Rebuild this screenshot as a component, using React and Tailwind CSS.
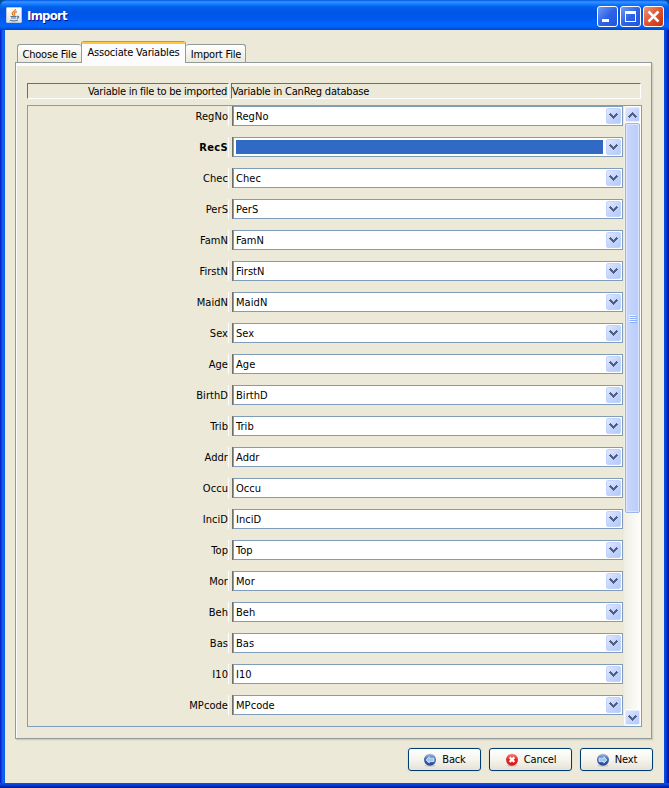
import React from "react";

const FIELDS = [
  "RegNo", "RecS", "Chec", "PerS", "FamN", "FirstN", "MaidN", "Sex", "Age", "BirthD",
  "Trib", "Addr", "Occu", "InciD", "Top", "Mor", "Beh", "Bas", "I10", "MPcode",
];

function Chevron({ up = false }) {
  return (
    <svg width="9" height="6" viewBox="0 0 9 6" className={up ? "rotate-180" : ""} shapeRendering="crispEdges">
      <path
        d="M1 0h1v1h1v1h1v1h1v-1h1v-1h1v-1h1v1h1v1h-1v1h-1v1h-1v1h-1v1h-1v-1h-1v-1h-1v-1h-1v-1h-1v-1h1z"
        fill="#4d6185"
      />
    </svg>
  );
}

function ArrowButton({ up = false, scroll = false }) {
  return (
    <div className={`flex shrink-0 items-center justify-center rounded-[2px] border bg-linear-to-br from-[#dfe8fe] via-[#c6d5fd] to-[#b5c9f8] ${scroll ? "h-[15px] w-[15px] border-[#e4ecff] shadow-[0_0_0_1px_#ffffff]" : "h-4 w-[15px] border-[#c3d3fd]"}`}>
      <Chevron up={up} />
    </div>
  );
}

function TitleButton({ kind }) {
  const tone =
    kind === "close"
      ? "from-[#ee9478] via-[#e2522b] to-[#c4300b]"
      : "from-[#7198f4] via-[#2f63e6] to-[#1f55e0]";
  return (
    <div className={`flex h-[21px] w-[21px] items-center justify-center rounded-[3px] border border-white bg-linear-to-br ${tone}`}>
      <svg width="19" height="19" viewBox="0 0 19 19">
        {kind === "min" && <path d="M4 12h7v3H4z" fill="white" />}
        {kind === "max" && <path d="M4 4h11v11H4z M5 7v7h9V7z" fill="white" fillRule="evenodd" />}
        {kind === "close" && <path d="M4.500 4.500l10 10M14.500 4.500l-10 10" stroke="white" strokeWidth="2.500" />}
      </svg>
    </div>
  );
}

function JavaLogo() {
  return (
    <div className="h-4 w-4 rounded-[1px] border border-[#b8c6d8] bg-linear-to-b from-white to-[#dfe3e8]">
      <svg width="14" height="14" viewBox="0 0 14 14" fill="none">
        <path d="M8.500 1C9 3 5 3.500 5.200 5.500c0 1 1 1.300 1 2.200M10 3.500C7.500 4.200 6.700 5 7.500 6.200c.4.600.1 1.100-.4 1.500" stroke="#e58427" strokeWidth="1.400" />
        <path d="M3.500 8.500h6M4 10h5M3 12.200c2 .8 6 .7 8-.2M10 8.400c2.300-.5 2.100 1.600-.2 2" stroke="#547795" strokeWidth="1.200" />
      </svg>
    </div>
  );
}

function ActionIcon({ kind }) {
  return (
    <svg width="14" height="14" viewBox="0 0 14 14">
      <defs>
        <linearGradient id={`orb-${kind}`} x1="0" y1="0" x2="0" y2="1">
          <stop offset="0" stopColor={kind === "cancel" ? "#f58a83" : "#b4c0d8"} />
          <stop offset="0.45" stopColor={kind === "cancel" ? "#e52a26" : "#4068b0"} />
          <stop offset="1" stopColor={kind === "cancel" ? "#d81515" : "#234798"} />
        </linearGradient>
      </defs>
      <ellipse cx="7" cy="12.500" rx="5.500" ry="1.200" fill="#000" opacity="0.12" />
      <circle cx="7" cy="6.700" r="6" fill={`url(#orb-${kind})`} />
      {kind === "cancel" ? (
        <path d="M4.700 4.400l4.600 4.600M9.300 4.400L4.700 9" stroke="white" strokeWidth="2.300" />
      ) : (
        <path
          d="M3 5.200h4.800V3.800L11 6.900 7.800 10V8.600H3z"
          fill="#9cc6f0"
          stroke="#d6e9fb"
          strokeWidth="0.900"
          transform={kind === "back" ? "matrix(-1 0 0 1 14 0)" : undefined}
        />
      )}
    </svg>
  );
}

function ActionButton({ kind, width, children }) {
  return (
    <button className={`flex h-[23px] items-center justify-center gap-[5px] rounded-[3px] border border-[#003c74] bg-linear-to-b from-white via-[#f5f4ee] to-[#e6e2d6] shadow-[0_0_0_1px_#e4e1d1] ${width}`}>
      <ActionIcon kind={kind} />
      <span>{children}</span>
    </button>
  );
}

function FieldRow({ name }) {
  const missing = name === "RecS";
  return (
    <div className="flex h-5 shrink-0 tracking-[0.060px]">
      <div className={`flex w-[201px] items-center justify-end border-r border-white pt-px ${missing ? "font-bold tracking-[0.350px]" : ""}`}>
        {name}
      </div>
      <div className="ml-[3px] flex w-[391px] border-l border-[#716f64]">
        <div className="flex w-full items-center border border-[#7f9db9] bg-white pr-px pl-[2px]">
          <div className={`flex h-[14px] flex-1 items-center ${missing ? "bg-[#316ac5]" : "pt-px"}`}>{missing ? "" : name}</div>
          <div className="ml-[3px] flex">
            <ArrowButton />
          </div>
        </div>
      </div>
    </div>
  );
}

export default function App() {
  return (
    <div className="flex h-[788px] w-[669px] cursor-default flex-col overflow-hidden bg-[#004e98] font-['DejaVu_Sans_Condensed','DejaVu_Sans',sans-serif] text-[11px] leading-[14px] tracking-[-0.190px] text-black">
      <header className="flex h-[30px] shrink-0 items-center rounded-t-[7px] bg-[linear-gradient(to_bottom,#0058e6_0px,#3a93ff_2px,#127dff_4px,#0260ed_7px,#0055e5_12px,#0059ee_19px,#0066ff_25px,#0060f5_27px,#0144d0_30px)] pr-[5px] pl-[6px]">
        <JavaLogo />
        <h1 className="ml-[5px] pt-px text-[13px] font-bold tracking-[-0.720px] text-white [text-shadow:1px_1px_0_#0f1089]">Import</h1>
        <div className="ml-auto flex gap-[2px] pt-[3px]">
          <TitleButton kind="min" />
          <TitleButton kind="max" />
          <TitleButton kind="close" />
        </div>
      </header>

      <div className="flex min-h-0 flex-1">
        <div className="w-[5px] shrink-0 bg-[linear-gradient(to_right,#0019cf_0px,#0831d9_1px,#166aee_3px,#0855dd_5px)]" />
        <main className="flex w-[659px] flex-col bg-[#ece9d8]">
          <nav className="ml-3 flex h-8 items-end">
            <div className="flex h-[18px] w-[64px] items-center justify-center rounded-t-[3px] border border-r-0 border-b-0 border-[#919b9c] bg-linear-to-b from-white to-[#ece9d8] pt-[2px] whitespace-nowrap">Choose File</div>
            <div className="z-10 -mb-px flex h-[22px] w-[105px] flex-col overflow-hidden rounded-t-[3px] border-x border-[#919b9c] bg-[#fcfcfe]">
              <div className="h-[3px] shrink-0 border-t border-[#e68b2c] bg-[#ffc73c]" />
              <span className="pt-[2px] text-center whitespace-nowrap">Associate Variables</span>
            </div>
            <div className="flex h-[18px] w-[60px] items-center justify-center rounded-t-[3px] border border-b-0 border-l-0 border-[#919b9c] bg-linear-to-b from-white to-[#ece9d8] pt-[2px] pl-px whitespace-nowrap">Import File</div>
          </nav>

          <section className="ml-[10px] flex h-[677px] w-[637px] shrink-0 flex-col border border-[#919b9c] pl-[11px] shadow-[inset_1px_3px_0_#fcfcfe,1px_1px_0_#d0cebf,2px_2px_0_#e3e0d0]">
            <div className="mt-5 flex h-4">
              <div className="flex w-[202px] items-center justify-end border border-t-[#716f64] border-r-white border-b-white border-l-[#716f64] pt-px pr-px tracking-[-0.260px]">Variable in file to be imported</div>
              <div className="ml-[2px] flex w-[410px] items-center border border-t-[#716f64] border-r-white border-b-white border-l-[#716f64] pt-px tracking-[-0.190px]">Variable in CanReg database</div>
            </div>

            <div className="mt-[6px] flex h-[622px] w-[615px] border border-[#7f9db9]">
              <div className="flex w-[596px] flex-col gap-[11px]">
                {FIELDS.map((name) => (
                  <FieldRow key={name} name={name} />
                ))}
              </div>
              <div className="flex w-[17px] flex-col items-center bg-linear-to-r from-[#f0eee5] to-[#fefefb] pt-px">
                <ArrowButton up scroll />
                <div className="mt-px flex h-[390px] w-[15px] shrink-0 flex-col items-center justify-center gap-px rounded-[2px] border border-[#9db5e6] bg-linear-to-r from-[#cad8fe] to-[#b9cbfa] shadow-[inset_0_0_0_1px_#dce6ff]">
                  {[0, 1, 2, 3].map((n) => (
                    <div key={n} className="h-px w-[7px] bg-[#eef4fe] shadow-[1px_1px_0_#8cb0f8]" />
                  ))}
                </div>
                <div className="mt-auto mb-px">
                  <ArrowButton scroll />
                </div>
              </div>
            </div>
          </section>

          <footer className="mt-[9px] ml-[403px] flex gap-2">
            <ActionButton kind="back" width="w-[73px]">Back</ActionButton>
            <ActionButton kind="cancel" width="w-[83px]">Cancel</ActionButton>
            <ActionButton kind="next" width="w-[73px]">Next</ActionButton>
          </footer>
        </main>
        <div className="w-[5px] shrink-0 bg-[linear-gradient(to_right,#0855dd_0px,#0040e0_2px,#0019b0_4px,#00138c_5px)]" />
      </div>
      <div className="h-[5px] shrink-0 bg-[linear-gradient(to_bottom,#0855dd_0px,#0441d8_2px,#0020a8_4px,#00138c_5px)]" />
    </div>
  );
}
